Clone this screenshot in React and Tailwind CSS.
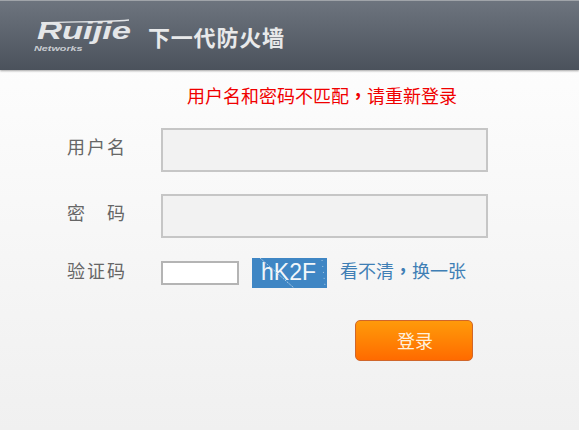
import React from 'react';

function Logo() {
  return (
    <div className="relative w-[95px] h-[34px] mr-[17px]">
      <span className="absolute left-[1px] top-[2px] origin-left scale-x-[1.44] text-[24px] leading-[20px] font-bold italic text-[#e4e6e8] font-['Liberation_Sans',sans-serif]">Ruijie</span>
      <span className="absolute left-[-2px] top-[26px] origin-left scale-x-[1.35] text-[8px] leading-[8px] font-bold italic text-[#c9cdd2] font-['Liberation_Sans',sans-serif]">Networks</span>
      <svg className="absolute left-[2px] top-[-2px]" width="96" height="8" viewBox="0 0 96 8" fill="none">
        <path d="M3 6 C30 4 60 6 91 3" stroke="#e4e6e8" strokeWidth="1.4" />
      </svg>
    </div>
  );
}

function Field({ children }) {
  return (
    <div className="flex items-center h-[44px] mb-[22px]">
      <div className="w-[94px] pb-[8px]">{children}</div>
      <input className="w-[327px] h-[44px] bg-[#f2f2f2] border-2 border-[#c6c6c6] outline-none" />
    </div>
  );
}

export default function App() {
  return (
    <div className="w-[579px] h-[430px] overflow-hidden flex flex-col bg-gradient-to-b from-white to-[#f0f0f0] font-['Noto_Sans_CJK_SC','Liberation_Sans',sans-serif]">
      <header className="h-[70px] shrink-0 flex items-center pl-[36px] border-t border-[#a0a4a9] bg-gradient-to-b from-[#6d747e] to-[#4b525c] shadow-[0_1px_2px_rgba(0,0,0,0.35)]">
        <Logo />
        <h1 className="text-[22px] leading-[30px] font-bold text-[#e8e9ea] tracking-[0.8px]">下一代防火墙</h1>
      </header>

      <main className="flex-1 pl-[67px]">
        <p className="mt-[12px] ml-[120px] h-[26px] text-[18px] leading-[26px] text-[#f00000]">
          用户名和密码不匹配<span className="font-['Noto_Sans_CJK_TC',sans-serif] font-bold">，</span>请重新登录
        </p>

        <div className="mt-[20px]">
          <Field>
            <span className="block text-[18px] leading-[24px] tracking-[2px] text-[#666]">用户名</span>
          </Field>
          <Field>
            <span className="flex justify-between w-[58px] text-[18px] leading-[24px] text-[#666]">
              <span>密</span>
              <span>码</span>
            </span>
          </Field>
        </div>

        <div className="flex items-center h-[30px] mt-[-2px]">
          <div className="w-[94px] pb-[7px] text-[18px] leading-[24px] tracking-[2px] text-[#666]">验证码</div>
          <input className="w-[78px] h-[24px] bg-white border-2 border-[#b4b4b4] outline-none" />
          <div className="relative ml-[13px] w-[75px] h-[30px] pr-[2px] bg-[#3f86c4] text-[#f1f6fa] text-[23px] leading-[28px] text-center font-['Liberation_Sans',sans-serif] overflow-hidden">
            hK2F
            <svg className="absolute inset-0" width="75" height="30" viewBox="0 0 75 30" fill="none">
              <path d="M8 0 L42 30" stroke="#a9cbe6" strokeWidth="1" strokeDasharray="2 1" />
              <path d="M70 2 L73 28" stroke="#a9cbe6" strokeWidth="1" strokeDasharray="1 5" />
            </svg>
          </div>
          <a className="ml-[13px] pb-[7px] text-[18px] leading-[24px] text-[#3f7fb5] whitespace-nowrap">
            看不清<span className="font-['Noto_Sans_CJK_TC',sans-serif] font-bold">，</span>换一张
          </a>
        </div>

        <button className="block mt-[32px] ml-[288px] w-[118px] h-[41px] pl-[2px] rounded-[5px] border border-[#d0662a] bg-gradient-to-b from-[#ff9a0a] to-[#ff6a00] text-[18px] text-[#fff0dc]">登录</button>
      </main>
    </div>
  );
}
